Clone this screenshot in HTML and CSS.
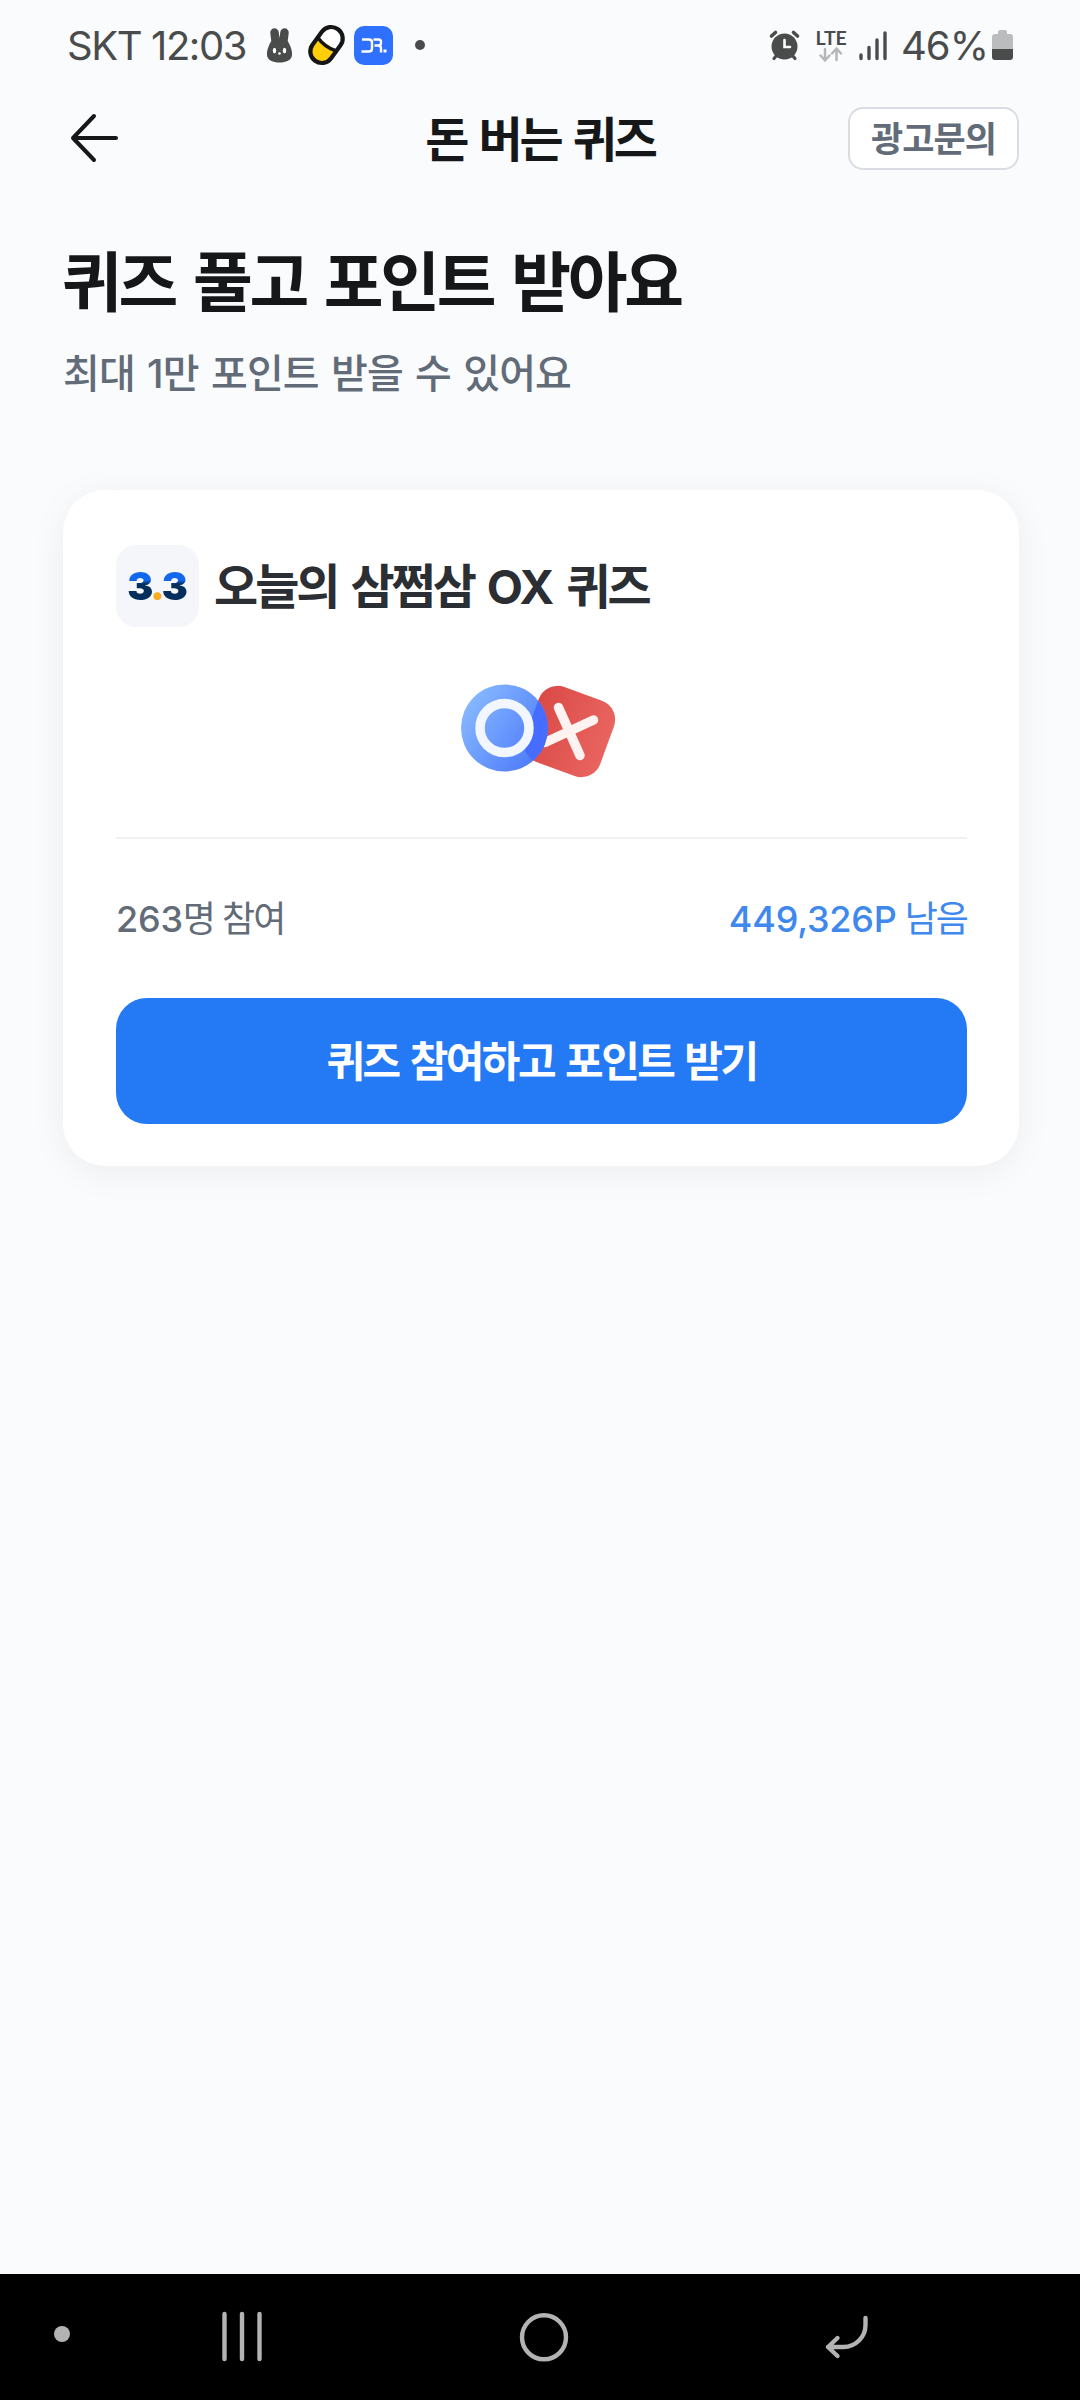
FILE: index.html
```html
<!DOCTYPE html>
<html lang="ko">
<head>
<meta charset="utf-8">
<title>돈 버는 퀴즈</title>
<link rel="stylesheet" href="styles.css">
</head>
<body>
<div class="screen">
  <div class="status">
    <span class="clock">SKT 12:03</span>
    <svg class="notices" width="170" height="50" viewBox="260 20 170 50">
      <path d="M274.500 32.500l1.500 12M284.500 32.500l-1.500 12" stroke="#4a4c4b" stroke-width="8.500" stroke-linecap="round"/>
      <path d="M279.500 38.500c6 0 9 2.500 10.500 7 1.500 3.500 2.200 6 2 9.500-0.500 5.500-6 7.500-12.500 7.500s-12-2-12.500-7.500c-0.200-3.500 0.500-6 2-9.500 1.500-4.500 4.500-7 10.500-7z" fill="#4a4c4b"/>
      <ellipse cx="274.500" cy="50.500" rx="1.700" ry="2.800" fill="#fff"/><ellipse cx="284.500" cy="50.500" rx="1.700" ry="2.800" fill="#fff"/><circle cx="279.500" cy="53.500" r="1.300" fill="#fff"/>
      <g transform="rotate(36 326.500 45)">
        <rect x="315" y="25.500" width="23" height="39" rx="11.500" fill="#fff"/>
        <path d="M315 44h23v9a11.500 11.500 0 0 1-23 0z" fill="#ffcf0a"/>
        <rect x="315" y="25.500" width="23" height="39" rx="11.500" fill="none" stroke="#161616" stroke-width="4.200"/>
        <path d="M315 44q11.500 4 23 0" fill="none" stroke="#161616" stroke-width="3.500"/>
      </g>
      <rect x="354" y="26" width="39" height="39" rx="10" fill="#2f70ff"/>
      <path d="M362 39.500h7q3 0 3 3v6q0 3-3 3h-7.500M373.500 39.500h5q2.500 0 2.500 2.500v1q0 2.500-2.500 2.500H374.500M378 45.500q3 0 3 3v4" fill="none" stroke="#fff" stroke-width="2.400"/>
      <rect x="383.500" y="49.500" width="3" height="3" fill="#fff"/>
      <circle cx="420" cy="45" r="5" fill="#4a4c4b"/>
    </svg>
    <svg class="signals" width="120" height="50" viewBox="766 20 120 50">
      <g stroke="#4a4c4b" stroke-linecap="round" fill="none">
        <circle cx="784.500" cy="46.500" r="13" fill="#4a4c4b" stroke="none"/>
        <path d="M771.500 36l4-3.500M797.500 36l-4-3.500" stroke-width="3.600"/>
        <path d="M777 55l-3 3.500M792 55l3 3.500" stroke-width="3.200"/>
        <path d="M784.500 40v7h5.500" stroke="#fff" stroke-width="2.600"/>
        <path d="M861 55v3.500M869 47.500v11M877 40v18.500M885 33v25.500" stroke-width="3.400"/>
      </g>
      <text class="lte" x="815.500" y="44.500">LTE</text>
      <path d="M825 49v11m-4.500-4.500l4.500 5 4.500-5M836.500 60V49m-4.500 4.500l4.500-5 4.500 5" fill="none" stroke="#b6b7b9" stroke-width="2.500" stroke-linecap="round"/>
    </svg>
    <span class="percent">46%</span>
    <svg class="battery" width="22" height="32" viewBox="0 0 22 32">
      <path d="M3 5h3V3q0-2 2-2h5q2 0 2 2v2h3q3 0 3 3v12H0V8q0-3 3-3z" fill="#bbbcbe"/>
      <path d="M0 20h21v8q0 3-3 3H3q-3 0-3-3z" fill="#4a4c4b"/>
    </svg>
  </div>
  <header class="bar">
    <svg class="back" width="48" height="50" viewBox="0 0 48 50"><path d="M46 25H3M24 3L3 25l21 22" fill="none" stroke="#161718" stroke-width="4" stroke-linecap="round" stroke-linejoin="round"/></svg>
    <h1 class="bar-title">돈 버는 퀴즈</h1>
    <a class="inquiry">광고문의</a>
  </header>
  <main class="content">
    <h2 class="headline">퀴즈 풀고 포인트 받아요</h2>
    <p class="subline">최대 <span class="digit">1</span>만 포인트 받을 수 있어요</p>
    <section class="card">
      <div class="card-head">
        <div class="logo"><span class="three">3</span><span class="dot">.</span><span class="three">3</span></div>
        <h3 class="card-title">오늘의 삼쩜삼 <span class="latin">OX</span> 퀴즈</h3>
      </div>
      <svg class="ox" width="160" height="100" viewBox="458 680 160 100">
        <defs>
          <linearGradient id="blue" x1="0" y1="0.200" x2="1" y2="0.900"><stop offset="0" stop-color="#89bbff"/><stop offset="1" stop-color="#4774fb"/></linearGradient>
          <linearGradient id="red" x1="0" y1="0" x2="1" y2="0"><stop offset="0" stop-color="#da4a47"/><stop offset="1" stop-color="#e9645f"/></linearGradient>
          <clipPath id="disc"><circle cx="504.500" cy="728" r="43.500"/></clipPath>
        </defs>
        <rect x="529.500" y="691.500" width="80" height="80" rx="20" transform="rotate(20 569.500 731.500)" fill="url(#red)"/>
        <path d="M558.500 707.500L580 755.500M545 742.500l48.500-22.500" stroke="#fff3f2" stroke-width="9.500" stroke-linecap="round"/>
        <circle cx="504.500" cy="728" r="43.500" fill="url(#blue)"/>
        <g clip-path="url(#disc)"><rect x="529.500" y="691.500" width="80" height="80" rx="20" transform="rotate(20 569.500 731.500)" fill="#466dff"/></g>
        <circle cx="504.500" cy="728" r="24.500" fill="none" stroke="#f2f6ff" stroke-width="9.500"/>
      </svg>
      <div class="stats">
        <span class="joined">263<span class="ko">명 참여</span></span>
        <span class="left">449,326P<span class="ko"> 남음</span></span>
      </div>
      <button class="cta">퀴즈 참여하고 포인트 받기</button>
    </section>
  </main>
  <nav class="nav">
    <svg width="1080" height="126" viewBox="0 2274 1080 126" fill="none" stroke="#b3b3b3" stroke-width="4.400">
      <circle cx="62" cy="2334" r="8" fill="#b3b3b3" stroke="none"/>
      <path d="M224.500 2314v45M242 2314v45M259.500 2314v45" stroke-linecap="round"/>
      <circle cx="544" cy="2337.300" r="22"/>
      <path d="M865.500 2318v7a22 22 0 0 1-22 22H828M837.500 2338l-9.500 9 9.500 9" stroke-linecap="round" stroke-linejoin="round"/>
    </svg>
  </nav>
</div>
</body>
</html>
```
FILE: styles.css
```css
* { box-sizing: border-box; }
body { margin: 0; background: #fafbfd; font-family: "Noto Sans CJK KR", sans-serif; }
h1, h2, h3, p { margin: 0; white-space: nowrap; }
svg { display: block; flex: none; }
.screen { height: 2400px; display: flex; flex-direction: column; }

.status { height: 90px; display: flex; align-items: center; padding-left: 67px; color: #4a4c4b; font-family: Inter, sans-serif; font-weight: 400; font-size: 40px; white-space: nowrap; }
.clock { width: 193px; letter-spacing: -1.400px; }
.signals { margin-left: 336px; overflow: visible; }
.lte { font: 700 19.500px Lato, sans-serif; fill: #4a4c4b; }
.percent { margin-left: 15px; width: 91px; letter-spacing: -1px; }

.bar { height: 96px; display: grid; grid-template-columns: 1fr auto 1fr; align-items: center; padding: 0 61px; }
.back { margin-left: 9px; }
.bar-title { padding-bottom: 5px; font-size: 48px; line-height: 60px; font-weight: 700; letter-spacing: -3.200px; word-spacing: 2px; color: #161718; }
.inquiry { justify-self: end; width: 171px; height: 63px; padding-bottom: 3px; display: flex; align-items: center; justify-content: center; border: 2px solid #d9dce0; border-radius: 15px; background: #fff; color: #626c78; font-size: 35px; line-height: 40px; font-weight: 700; letter-spacing: -1px; }

.content { flex: 1; padding: 50px 61px 0 63px; }
.headline { margin-left: -1px; font-size: 65px; line-height: 84px; font-weight: 700; letter-spacing: -3.300px; word-spacing: 3px; color: #161718; }
.subline { height: 56px; margin-top: 22px; font-size: 40px; line-height: 58px; font-weight: 500; letter-spacing: -0.900px; word-spacing: 2px; color: #626c78; }
.digit { font-family: Inter, sans-serif; line-height: 1; }

.card { margin-top: 92px; height: 676px; padding: 55px 52px 42px 53px; border-radius: 42px; background: #fff; box-shadow: 0 6px 36px rgba(0, 0, 0, 0.060); display: flex; flex-direction: column; }
.card-head { display: flex; align-items: center; gap: 15px; height: 82px; }
.logo { width: 83px; height: 82px; border-radius: 20px; background: #f4f6f9; display: flex; align-items: center; justify-content: center; font: 900 39px/48px Inter, sans-serif; }
.three { color: transparent; background: linear-gradient(#1268ed 38%, #052e5c 46%); background-clip: text; -webkit-background-clip: text; }
.dot { margin: 0 -3px; color: #f9ad1c; }
.card-title { padding-bottom: 6px; font-size: 48px; line-height: 60px; font-weight: 700; color: #2b2e33; letter-spacing: -3px; word-spacing: 2.500px; }
.latin { font-family: Inter, sans-serif; font-size: 47px; letter-spacing: -1px; line-height: 1; }
.ox { margin: 53px 0 57px 342px; }
.stats { height: 161px; padding-bottom: 3px; border-top: 2px solid #f0f1f3; display: flex; align-items: center; justify-content: space-between; font: 450 36px/50px Inter, "Noto Sans CJK KR", sans-serif; letter-spacing: -0.200px; color: #626c78; }
.ko { letter-spacing: -2px; font-weight: 400; font-family: "Noto Sans CJK KR", sans-serif; white-space: pre; }
.left { color: #3f88ed; }
.cta { flex: none; height: 126px; padding: 0 0 5px; border: 0; border-radius: 31px; background: #2479f4; color: #fff; font: 700 42px/60px "Noto Sans CJK KR", sans-serif; letter-spacing: -2.600px; word-spacing: 2px; }

.nav { height: 126px; background: #000; }
```
